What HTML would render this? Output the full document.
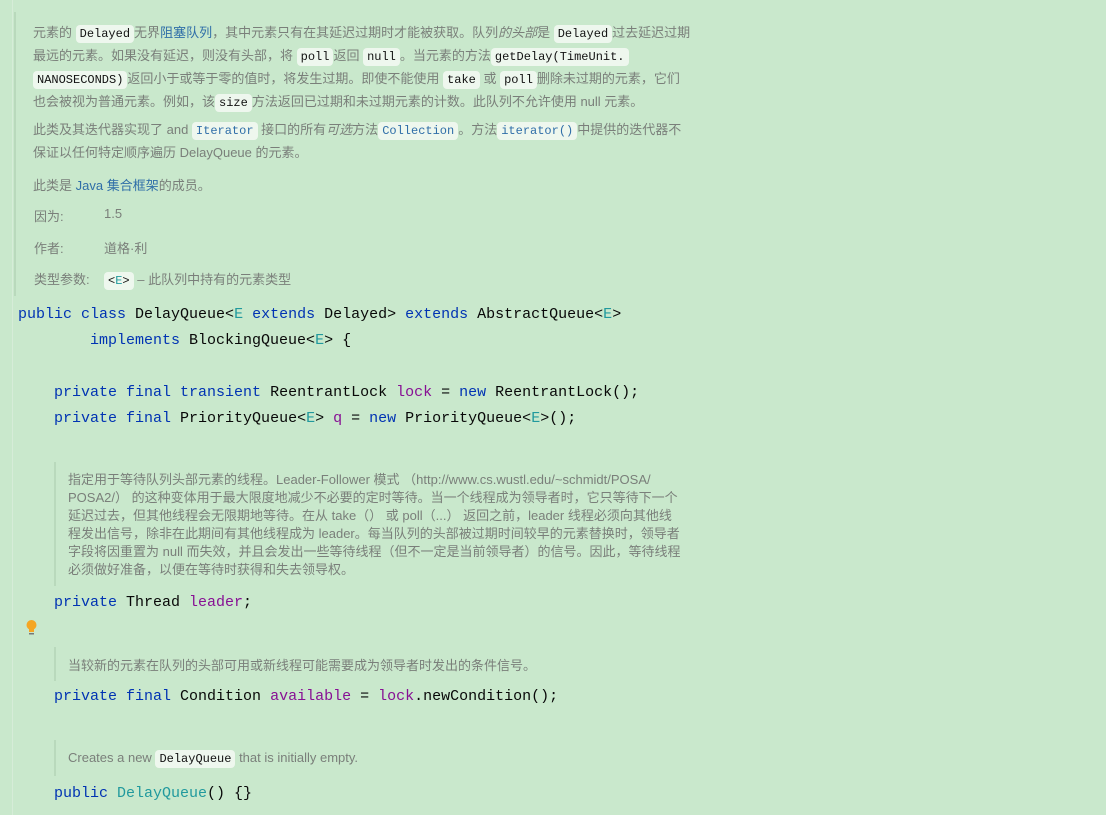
<!DOCTYPE html>
<html><head><meta charset="utf-8"><style>
body{margin:0;width:1106px;height:815px;background:#c9e8cc;position:relative;overflow:hidden;font-family:"Liberation Sans","Noto Sans CJK SC",sans-serif}
.gut{position:absolute;left:12px;top:0;width:1px;height:815px;background:#d6ecd8}
.doc{position:absolute;color:#7a7f7a;font-size:13px;white-space:nowrap}
.bar{position:absolute;width:2px;background:#b9d9bc}
.c{font-family:"Liberation Mono",monospace;font-size:12px;background:#eef7ee;color:#111;border-radius:4px;padding:2px 4px}
.cb{font-family:"Liberation Mono",monospace;font-size:12px;background:#eef7ee;color:#2f6ea8;border-radius:4px;padding:2px 4px}
a{color:#2f6ea8;text-decoration:none}
.code{position:absolute;font-family:"Liberation Mono",monospace;font-size:15px;color:#080808;white-space:pre;line-height:26px}
.k{color:#0033b3}.p{color:#871094}.t{color:#20999d}
</style></head><body>
<div class="gut"></div>
<div class="bar" style="left:14px;top:12px;height:284px"></div>
<div class="doc" style="left:33px;top:22px;line-height:21px">
元素的 <span class="c">Delayed</span>无界<a>阻塞队列</a>，其中元素只有在其延迟过期时才能被获取。队列<i>的头部</i>是 <span class="c">Delayed</span>过去延迟过期<br>最远的元素。如果没有延迟，则没有头部，将 <span class="c">poll</span>返回 <span class="c">null</span>。当元素的方法<span class="c">getDelay(TimeUnit.</span><br><span class="c">NANOSECONDS)</span>返回小于或等于零的值时，将发生过期。即使不能使用 <span class="c">take</span> 或 <span class="c">poll</span>删除未过期的元素，它们<br>也会被视为普通元素。例如，该<span class="c">size</span>方法返回已过期和未过期元素的计数。此队列不允许使用 null 元素。
<div style="margin-top:5px">此类及其迭代器实现了 and <span class="cb">Iterator</span> 接口的所有<i>可选</i>方法<span class="cb">Collection</span>。方法<span class="cb">iterator()</span>中提供的迭代器不<br>保证以任何特定顺序遍历 DelayQueue 的元素。</div>
<div style="margin-top:12px">此类是 <a>Java 集合框架</a>的成员。</div>
</div>
<div class="doc" style="left:34px;top:206px">因为:</div><div class="doc" style="left:104px;top:206px">1.5</div>
<div class="doc" style="left:34px;top:238px">作者:</div><div class="doc" style="left:104px;top:238px">道格·利</div>
<div class="doc" style="left:34px;top:269px">类型参数:</div><div class="doc" style="left:104px;top:269px"><span class="c">&lt;<span class="t">E</span>&gt;</span> – 此队列中持有的元素类型</div>

<div class="code" style="left:18px;top:302px"><span class="k">public class</span> DelayQueue&lt;<span class="t">E</span> <span class="k">extends</span> Delayed&gt; <span class="k">extends</span> AbstractQueue&lt;<span class="t">E</span>&gt;
        <span class="k">implements</span> BlockingQueue&lt;<span class="t">E</span>&gt; {

    <span class="k">private final transient</span> ReentrantLock <span class="p">lock</span> = <span class="k">new</span> ReentrantLock();
    <span class="k">private final</span> PriorityQueue&lt;<span class="t">E</span>&gt; <span class="p">q</span> = <span class="k">new</span> PriorityQueue&lt;<span class="t">E</span>&gt;();</div>

<div class="bar" style="left:54px;top:462px;height:124px"></div>
<div class="doc" style="left:68px;top:471px;line-height:18px">指定用于等待队列头部元素的线程。Leader-Follower 模式 （http://www.cs.wustl.edu/~schmidt/POSA/<br>POSA2/） 的这种变体用于最大限度地减少不必要的定时等待。当一个线程成为领导者时，它只等待下一个<br>延迟过去，但其他线程会无限期地等待。在从 take（） 或 poll（...） 返回之前，leader 线程必须向其他线<br>程发出信号，除非在此期间有其他线程成为 leader。每当队列的头部被过期时间较早的元素替换时，领导者<br>字段将因重置为 null 而失效，并且会发出一些等待线程（但不一定是当前领导者）的信号。因此，等待线程<br>必须做好准备，以便在等待时获得和失去领导权。</div>
<div class="code" style="left:54px;top:590px"><span class="k">private</span> Thread <span class="p">leader</span>;</div>
<svg style="position:absolute;left:25px;top:619px" width="13" height="18"><circle cx="6.5" cy="6" r="5" fill="#f5a623"/><rect x="4" y="10" width="5" height="3" fill="#f5a623"/><rect x="4" y="14" width="5" height="1.5" fill="#777"/></svg>
<div class="bar" style="left:54px;top:647px;height:34px"></div>
<div class="doc" style="left:68px;top:655px">当较新的元素在队列的头部可用或新线程可能需要成为领导者时发出的条件信号。</div>
<div class="code" style="left:54px;top:684px"><span class="k">private final</span> Condition <span class="p">available</span> = <span class="p">lock</span>.newCondition();</div>
<div class="bar" style="left:54px;top:740px;height:36px"></div>
<div class="doc" style="left:68px;top:750px">Creates a new <span class="c">DelayQueue</span> that is initially empty.</div>
<div class="code" style="left:54px;top:781px"><span class="k">public</span> <span class="t">DelayQueue</span>() {}</div>
</body></html>
